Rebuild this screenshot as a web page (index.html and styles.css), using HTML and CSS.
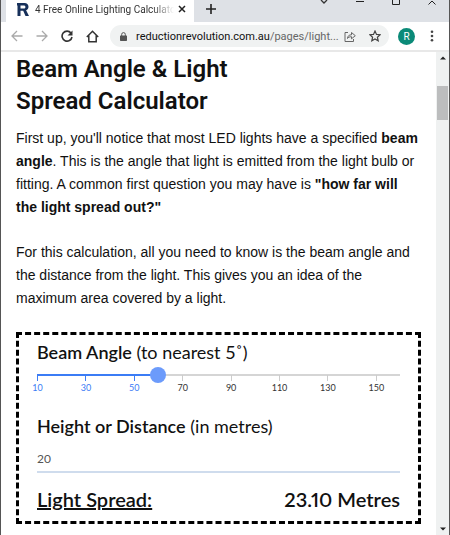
FILE: index.html
```html
<!DOCTYPE html>
<html lang="en">
  <head>
    <meta charset="utf-8">
    <title>4 Free Online Lighting Calculators</title>
    <link rel="stylesheet" href="styles.css">
  </head>
  <body>
    <div class="window">
      <div class="tabs">
        <div class="tab">
          <svg class="logo" viewBox="0 0 12 13" width="12" height="13"><path fill="#17305a" fill-rule="evenodd" d="M0 0h7.500c2.400 0 4 1.500 4 3.800 0 1.900-1 3-2.400 3.500L12 13H8.500L6.200 7.800H3.500V13H.5V2.500H0zM3.500 2.500V5.600H6.700c1.100 0 1.700-.6 1.700-1.600s-.6-1.500-1.700-1.500z"/></svg>
          <span class="tab-title">4 Free Online Lighting Calculator</span>
          <button class="icon-btn" aria-label="Close tab"><svg width="8" height="8" viewBox="0 0 8 8"><path d="M1 1l6 6M7 1L1 7" stroke="#222" stroke-width="1.500"/></svg></button>
        </div>
        <button class="icon-btn new-tab" aria-label="New tab"><svg width="10" height="10" viewBox="0 0 10 10"><path d="M5 0v10M0 5h10" stroke="#222" stroke-width="1.600"/></svg></button>
        <div class="window-buttons">
          <button class="icon-btn" aria-label="Search tabs"><svg width="8" height="5" viewBox="0 0 8 5"><path d="M1 0l3 3 3-3" fill="none" stroke="#333" stroke-width="1.300"/></svg></button>
          <button class="icon-btn" aria-label="Minimise"><svg width="8" height="5" viewBox="0 0 8 5"><path d="M0 1.500h8" stroke="#222"/></svg></button>
          <button class="icon-btn" aria-label="Maximise"><svg width="8" height="5" viewBox="0 0 8 5"><path d="M.5 0v4.500h7V0" fill="none" stroke="#222"/></svg></button>
          <button class="icon-btn" aria-label="Close"><svg width="8" height="5" viewBox="0 0 8 5"><path d="M.5 4.500L4 1l3.500 3.500" fill="none" stroke="#222"/></svg></button>
        </div>
      </div>

      <div class="toolbar">
        <div class="nav">
          <button class="icon-btn" aria-label="Back"><svg width="12" height="12" viewBox="0 0 12 12"><path d="M11.500 6H1M6 1L1 6l5 5" fill="none" stroke="#aaa" stroke-width="1.300"/></svg></button>
          <button class="icon-btn" aria-label="Forward"><svg width="12" height="12" viewBox="0 0 12 12"><path d="M.5 6H11M6 1l5 5-5 5" fill="none" stroke="#aaa" stroke-width="1.300"/></svg></button>
          <button class="icon-btn" aria-label="Reload"><svg width="12" height="12" viewBox="0 0 12 12"><path d="M10 3A5 5 0 1 0 11 7" fill="none" stroke="#333" stroke-width="1.600"/><path d="M11.500.5V5.500H6.500z" fill="#333"/></svg></button>
          <button class="icon-btn" aria-label="Home"><svg width="13" height="13" viewBox="0 0 13 13"><path d="M.8 7L6.500 1.300 12.200 7M2.800 5.500v6.300h7.400V5.500" fill="none" stroke="#333" stroke-width="1.500"/></svg></button>
        </div>
        <div class="address">
          <svg width="7" height="9" viewBox="0 0 7 9"><path d="M1.700 4V2.400a1.800 1.800 0 0 1 3.600 0V4" fill="none" stroke="#555"/><rect y="3.400" width="7" height="5.600" rx=".7" fill="#555"/></svg>
          <span class="url">reductionrevolution.com.au<span class="path">/pages/light...</span></span>
          <button class="icon-btn" aria-label="Share"><svg width="12" height="11" viewBox="0 0 12 11"><path d="M4 1.500H1v9h8.500V8M3.500 7.500C3.700 5 5 3.800 7.500 3.800V1.500L11.300 4.700 7.500 7.800V5.700C5.500 5.700 4.300 6.300 3.500 7.500z" fill="none" stroke="#666"/></svg></button>
          <button class="icon-btn" aria-label="Bookmark"><svg width="12" height="12" viewBox="0 0 12 12"><path d="M6 1l1.500 3.400 3.700.3-2.800 2.500.8 3.600L6 8.900l-3.200 1.900.8-3.600L.8 4.700l3.700-.3z" fill="none" stroke="#444" stroke-width="1.200"/></svg></button>
        </div>
        <button class="avatar">R</button>
        <button class="icon-btn" aria-label="Menu"><svg width="4" height="12" viewBox="0 0 4 12" fill="#444"><circle cx="2" cy="1.700" r="1.300"/><circle cx="2" cy="6" r="1.300"/><circle cx="2" cy="10.300" r="1.300"/></svg></button>
      </div>

      <div class="view">
        <main>
          <h2>Beam Angle &amp; Light<br>Spread Calculator</h2>
          <p>First up, you'll notice that most LED lights have a specified <b>beam angle</b>. This is the angle that light is emitted from the light bulb or fitting. A common first question you may have is <b>"how far will the light spread out?"</b></p>
          <p>For this calculation, all you need to know is the beam angle and the distance from the light. This gives you an idea of the maximum area covered by a light.</p>

          <form class="calculator">
            <label for="angle"><b>Beam Angle</b> (to nearest 5˚)</label>
            <input type="range" id="angle" min="10" max="160" step="5" value="60">
            <ul class="ticks">
              <li class="on">10</li>
              <li class="on">30</li>
              <li class="on">50</li>
              <li>70</li>
              <li>90</li>
              <li>110</li>
              <li>130</li>
              <li>150</li>
            </ul>
            <label for="distance"><b>Height or Distance</b> (in metres)</label>
            <input type="text" id="distance" value="20">
            <div class="result">
              <span class="result-name">Light Spread:</span>
              <output for="angle distance">23.10 Metres</output>
            </div>
          </form>
        </main>
        <div class="scrollbar">
          <svg width="6" height="4" viewBox="0 0 6 4"><path d="M0 3.500L3 .5l3 3z" fill="#222"/></svg>
          <div class="thumb"></div>
          <svg class="down" width="6" height="4" viewBox="0 0 6 4"><path d="M0 .5l3 3 3-3z" fill="#222"/></svg>
        </div>
      </div>
    </div>
  </body>
</html>
```

FILE: styles.css
```css
* {
  box-sizing: border-box;
}
body {
  margin: 0;
  background: #fff;
  font-family: "Liberation Sans", Arial, sans-serif;
  color: #111;
}
.window {
  display: flex;
  flex-direction: column;
  min-height: 100vh;
  border-left: 1px solid #555;
  border-right: 1px solid #555;
}
.icon-btn {
  display: flex;
  flex: none;
  padding: 0;
  border: 0;
  background: none;
}
.tabs {
  display: flex;
  height: 22px;
  padding-left: 5px;
  background: #dee1e6;
}
.tab {
  display: flex;
  align-items: center;
  gap: 4px;
  width: 188px;
  padding: 0 8px 4px 11px;
  background: #fff;
}
.logo {
  flex: none;
}
.tab-title {
  flex: 1;
  min-width: 0;
  padding-left: 2px;
  white-space: nowrap;
  font: 10px Roboto, sans-serif;
  color: #333;
  -webkit-mask-image: linear-gradient(to right, #000 85%, transparent);
  mask-image: linear-gradient(to right, #000 85%, transparent);
}
.new-tab {
  align-items: center;
  padding: 0 0 4px 12px;
}
.window-buttons {
  display: flex;
  gap: 28px;
  margin-left: auto;
  padding-right: 13px;
}
.window-buttons .icon-btn {
  align-self: flex-start;
}
.toolbar {
  display: flex;
  align-items: center;
  height: 30px;
  padding: 0 15px 0 10px;
  border-bottom: 2px solid #e8e8e8;
}
.nav {
  display: flex;
  align-items: center;
  gap: 13px;
}
.address {
  display: flex;
  flex: 1;
  align-items: center;
  height: 22px;
  margin: 0 9px 0 11px;
  padding: 0 8px 0 10px;
  border-radius: 11px;
  background: #f0f2f2;
}
.url {
  flex: 1;
  margin-left: 9px;
  white-space: nowrap;
  font: 11px Roboto, sans-serif;
}
.path {
  color: #666;
}
.address .icon-btn + .icon-btn {
  margin-left: 13px;
}
.avatar {
  flex: none;
  width: 17px;
  height: 17px;
  margin-right: 15px;
  padding: 0;
  border: 0;
  border-radius: 50%;
  background: #0b8a78;
  color: #fff;
  font: 10px Roboto, sans-serif;
}
.view {
  display: flex;
  flex: 1;
}
main {
  flex: 1;
  padding: 1px 15px 0;
}
h2 {
  margin: 0 0 10px;
  font: 600 24px/32px Roboto, Arial, sans-serif;
}
p {
  margin: 0 0 22px;
  font-size: 14px;
  line-height: 23px;
}
.calculator {
  display: flex;
  flex-direction: column;
  padding: 4px 18px 8px;
  border: 3px dashed #000;
  font-family: Lato, sans-serif;
}
label {
  font-size: 18px;
  line-height: 26px;
}
label b {
  font-weight: 600;
}
#angle {
  height: 16px;
  margin: 2px -8px 0;
  appearance: none;
  background: linear-gradient(to right, #3b7cf5 33%, #d5d5d5 33%) center / calc(100% - 16px) 2px no-repeat;
}
#angle::-webkit-slider-thumb {
  width: 16px;
  height: 16px;
  appearance: none;
  border-radius: 50%;
  background: #6c9bfb;
}
.ticks {
  display: grid;
  grid-template-columns: repeat(7, 2fr) 1fr;
  margin: -8px 0 18px;
  padding: 0;
  list-style: none;
  font-size: 9px;
  line-height: 14px;
  color: #333;
}
.ticks li {
  display: flex;
  flex-direction: column;
  align-items: center;
  width: 1px;
}
.ticks li::before {
  content: "";
  width: 1px;
  height: 6px;
  background: #ccc;
}
.ticks .on {
  color: #3b7cf5;
}
.ticks .on::before {
  background: #3b7cf5;
}
#distance {
  height: 34px;
  padding: 6px 0 0;
  border: 0;
  border-bottom: 2px solid #cfdced;
  background: none;
  color: #555;
  font: 12px Lato, sans-serif;
}
.result {
  display: flex;
  justify-content: space-between;
  margin-top: 13px;
  padding-bottom: 1px;
  font-size: 20px;
  font-weight: 600;
  font-variant-numeric: proportional-nums;
  line-height: 26px;
}
.result-name {
  text-decoration: underline;
}
.scrollbar {
  display: flex;
  flex-direction: column;
  align-items: center;
  width: 13px;
  padding: 4px 0;
  background: #eff1f1;
}
.thumb {
  width: 11px;
  height: 34px;
  margin-top: 26px;
  background: #bcbdbe;
}
.down {
  margin-top: auto;
}
```
